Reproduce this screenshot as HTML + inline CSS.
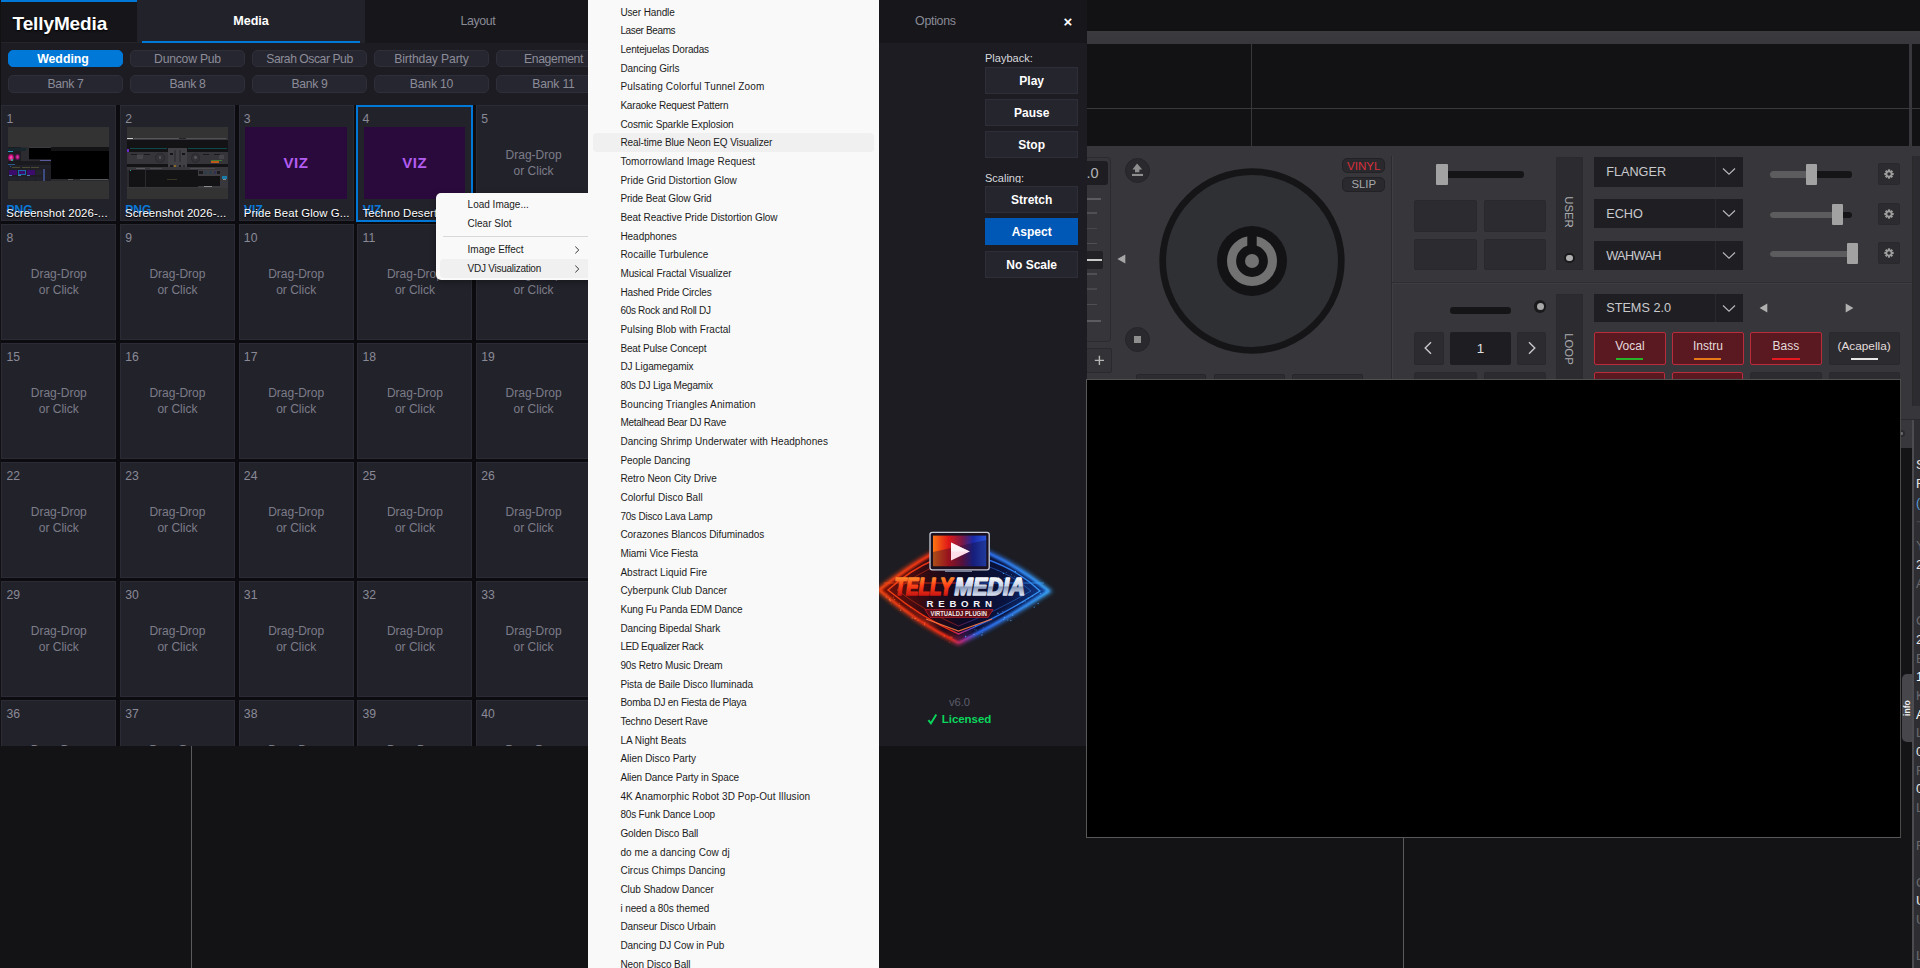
<!DOCTYPE html><html><head><meta charset="utf-8"><title>TellyMedia</title><style>
html,body{margin:0;padding:0}
body{width:1920px;height:968px;overflow:hidden;background:#131315;position:relative;font-family:"Liberation Sans",sans-serif;}
div,span,svg{position:absolute;box-sizing:border-box}
.t{white-space:pre;line-height:1}
.c{text-align:center}
#panel{left:0;top:0;width:1087px;height:746px;background:#1c1c22;overflow:hidden}
.pill{background:#262630;border:1px solid #2f2f3a;border-radius:5px;color:#8c8c98;font-size:12.2px;text-align:center;line-height:16.2px;height:17.4px;width:115.4px;white-space:pre}
.pill.on{background:#0078d7;border-color:#0078d7;color:#fff;font-weight:bold;font-size:12.3px;padding-right:5px}
.cell{background:#22222b;border:1px solid #2b2b35;width:114.8px;height:115.4px}
.num{left:4.1px;top:6.9px;font-size:12.2px;color:#8a8a96;line-height:1;white-space:pre}
.dd{left:0;width:100%;text-align:center;color:#7c7c88;font-size:12px;line-height:16.3px;top:40.9px;white-space:pre}
.thumb{left:5.7px;top:21px;width:101.2px;height:71.6px;background:#333333;overflow:hidden}
.viz{background:#2a0a3c}
.viz span{left:0;width:100%;top:28.2px;text-align:center;color:#b35cf2;font-weight:bold;font-size:15px;letter-spacing:.6px;line-height:1}
.badge{left:4.2px;top:97.4px;font-size:12.1px;font-weight:bold;color:#0a78d8;line-height:1;white-space:pre}
.name{left:4px;top:101.8px;font-size:11.4px;letter-spacing:.1px;color:#fff;line-height:1;white-space:pre;text-shadow:0 1px 1px #000}
.btn{left:985px;width:93.3px;height:27px;background:#25252e;border:1px solid #2e2e38;color:#fff;font-weight:bold;font-size:12px;text-align:center;line-height:26.6px;white-space:pre}
.mi{left:32.4px;font-size:10px;color:#1b1b1b;line-height:12px;white-space:pre;letter-spacing:-0.02px}
.dj{background:#37373b}
.pad{background:#2b2b2f;border:1px solid #29292c;border-radius:2px}
.drop{background:#1f1f23;color:#d4d4d6;font-size:12.7px;line-height:1;white-space:pre}
.redpad{background:#5c1820;border:1px solid #b02838;border-radius:2px;color:#e6dede;font-size:12px;text-align:center;white-space:pre}
</style></head><body>
<!-- VDJ background -->
<div style="left:1087px;top:0px;width:833px;height:31px;background:#121214"></div>
<div style="left:1087px;top:31px;width:833px;height:13px;background:linear-gradient(#3b3b3f,#38383c)"></div>
<div style="left:1087px;top:44px;width:833px;height:102px;background:#121214"></div>
<div style="left:1250.5px;top:44px;width:1px;height:102px;background:#38383a"></div>
<div style="left:1087px;top:107.5px;width:833px;height:1px;background:#3a3a3c"></div>
<div class="dj" style="left:1087px;top:146px;width:833px;height:274px;"></div>
<div style="left:1080px;top:157px;width:31px;height:185px;background:#36363a;border:1px solid #2b2b2f;border-radius:4px"></div>
<div style="left:1080px;top:161px;width:28px;height:23.5px;background:#1e1e22;border-radius:3px"></div>
<div class="t" style="left:1086.4px;top:165.6px;font-size:14.5px;color:#b4b4b8">.0</div>
<div style="left:1087px;top:197.7px;width:14.3px;height:2px;background:#5c5c60"></div>
<div style="left:1087px;top:212.0px;width:10px;height:1.6px;background:#505054"></div>
<div style="left:1087px;top:227.8px;width:10px;height:1.2px;background:#48484c"></div>
<div style="left:1087px;top:242.5px;width:10px;height:1.6px;background:#505054"></div>
<div style="left:1087px;top:273.2px;width:10px;height:1.6px;background:#505054"></div>
<div style="left:1087px;top:288.4px;width:10px;height:1.2px;background:#48484c"></div>
<div style="left:1087px;top:303.59999999999997px;width:10px;height:1.6px;background:#505054"></div>
<div style="left:1087px;top:320.0px;width:14.3px;height:2px;background:#5c5c60"></div>
<div style="left:1080px;top:251.2px;width:22.8px;height:17.8px;background:#222226;border-radius:2px"></div>
<div style="left:1087px;top:258.7px;width:14.8px;height:2.5px;background:#c8c8c8"></div>
<svg style="left:1117px;top:254px" width="9" height="10" viewBox="0 0 9 10"><path d="M8.3 0.4 L0.4 5 L8.3 9.6 Z" fill="#a6a6a6"/></svg>
<div style="left:1124.9px;top:157.9px;width:25px;height:25px;background:#2a2a2e;border:1.4px solid #252529;border-radius:50%"></div>
<svg style="left:1131px;top:163px" width="13" height="14" viewBox="0 0 13 14"><path d="M6.1 0.6 L11.2 6.5 L8.4 6.5 L8.4 9.3 L4 9.3 L4 6.5 L1.4 6.5 Z" fill="#8e8e8e"/><rect x="1" y="10.9" width="11" height="2.1" fill="#8e8e8e"/></svg>
<div style="left:1124.9px;top:326.7px;width:25px;height:25px;background:#2a2a2e;border:1.4px solid #252529;border-radius:50%"></div>
<div style="left:1134px;top:335.9px;width:7px;height:7.4px;background:#8e8e8e"></div>
<div style="left:1080px;top:348.2px;width:31.7px;height:24.5px;background:#333337;border:1px solid #2a2a2e;border-radius:2px"></div>
<svg style="left:1094px;top:355px" width="11" height="11" viewBox="0 0 11 11"><path d="M5.4 0.8 V10 M0.8 5.4 H10" stroke="#b4b4b4" stroke-width="1.4" fill="none"/></svg>
<div style="left:1136.4px;top:374px;width:69.6px;height:8px;background:#2d2d31;border:1px solid #27272b;border-radius:2px"></div>
<div style="left:1214px;top:374px;width:70.6px;height:8px;background:#2d2d31;border:1px solid #27272b;border-radius:2px"></div>
<div style="left:1292px;top:374px;width:70.5px;height:8px;background:#2d2d31;border:1px solid #27272b;border-radius:2px"></div>
<svg style="left:1156.8px;top:166.0px" width="190" height="190" viewBox="-95 -95 190 190"><circle r="89.3" fill="#2f3034" stroke="#151517" stroke-width="6.7"/><circle r="35" fill="#131315"/><circle r="20.45" fill="none" stroke="#727272" stroke-width="9.1"/><rect x="-4.7" y="-27" width="9.4" height="22" fill="#131315"/><circle r="11" fill="#131315"/><circle r="7" fill="#727272"/></svg>
<div style="left:1342.3px;top:158.2px;width:43px;height:14.8px;background:#2a2a2e;border:1px solid #222226;border-radius:5px;color:#d8303c;font-size:11.6px;text-align:center;line-height:13.6px;white-space:pre">VINYL</div>
<div style="left:1342.3px;top:177.4px;width:43px;height:14.4px;background:#2a2a2e;border:1px solid #222226;border-radius:5px;color:#a8a8ac;font-size:11.4px;text-align:center;line-height:13.2px;white-space:pre">SLIP</div>
<div style="left:1390.6px;top:156px;width:1px;height:224px;background:#2b2b2f"></div>
<div style="left:1391.5px;top:156px;width:1px;height:224px;background:#3f3f43"></div>
<div style="left:1392px;top:282.1px;width:520px;height:1px;background:#2e2e32"></div>
<div style="left:1392px;top:283.1px;width:520px;height:1px;background:#3e3e42"></div>
<div style="left:1444px;top:171.2px;width:80px;height:6.4px;background:#151517;border-radius:3.2px"></div>
<div style="left:1436px;top:163.8px;width:11.6px;height:21.2px;background:#a2a2a2;border-radius:1px"></div>
<div style="left:1414px;top:200px;width:63px;height:31.5px;background:#2c2c30;border:1px solid #29292c;border-radius:2px"></div>
<div style="left:1414px;top:238.8px;width:63px;height:30.8px;background:#2c2c30;border:1px solid #29292c;border-radius:2px"></div>
<div style="left:1484px;top:200px;width:61.8px;height:31.5px;background:#2c2c30;border:1px solid #29292c;border-radius:2px"></div>
<div style="left:1484px;top:238.8px;width:61.8px;height:30.8px;background:#2c2c30;border:1px solid #29292c;border-radius:2px"></div>
<div style="left:1556.3px;top:157px;width:26.5px;height:112.6px;background:#2c2c30;border:1px solid #2a2a2d"></div>
<div class="t" style="left:1568.4px;top:212.3px;width:0;height:0;"><div class="t" style="transform:translate(-50%,-50%) rotate(90deg);font-size:11.4px;color:#acacb0;left:0;top:0">USER</div></div>
<div style="left:1564.3px;top:253px;width:10.4px;height:10.4px;background:#1a1a1c;border-radius:50%"></div>
<div style="left:1566.3px;top:255px;width:6.4px;height:6.4px;background:#b0b0b0;border-radius:50%"></div>
<div class="drop" style="left:1594.2px;top:157px;width:149.2px;height:29.6px;"></div>
<div style="left:1715px;top:157px;width:1px;height:29.6px;background:#2a2a2e"></div>
<div class="t" style="left:1606.2px;top:166.0px;font-size:12.7px;color:#cacace;">FLANGER</div>
<svg style="left:1721.6px;top:167.3px" width="14" height="9" viewBox="0 0 14 9"><path d="M1 1.5 L7 7.2 L13 1.5" fill="none" stroke="#b8b8bc" stroke-width="1.15"/></svg>
<div class="drop" style="left:1594.2px;top:198.8px;width:149.2px;height:29.4px;"></div>
<div style="left:1715px;top:198.8px;width:1px;height:29.4px;background:#2a2a2e"></div>
<div class="t" style="left:1606.2px;top:208.1px;font-size:12.7px;color:#cacace;">ECHO</div>
<svg style="left:1721.6px;top:209.0px" width="14" height="9" viewBox="0 0 14 9"><path d="M1 1.5 L7 7.2 L13 1.5" fill="none" stroke="#b8b8bc" stroke-width="1.15"/></svg>
<div class="drop" style="left:1594.2px;top:241px;width:149.2px;height:28.6px;"></div>
<div style="left:1715px;top:241px;width:1px;height:28.6px;background:#2a2a2e"></div>
<div class="t" style="left:1606.2px;top:249.9px;font-size:12.7px;color:#cacace;letter-spacing:-0.6px;">WAHWAH</div>
<svg style="left:1721.6px;top:250.8px" width="14" height="9" viewBox="0 0 14 9"><path d="M1 1.5 L7 7.2 L13 1.5" fill="none" stroke="#b8b8bc" stroke-width="1.15"/></svg>
<div class="drop" style="left:1594.2px;top:293.6px;width:149.2px;height:28.8px;"></div>
<div style="left:1715px;top:293.6px;width:1px;height:28.8px;background:#2a2a2e"></div>
<div class="t" style="left:1606.2px;top:302.0px;font-size:12.7px;color:#cacace;">STEMS 2.0</div>
<svg style="left:1721.6px;top:303.5px" width="14" height="9" viewBox="0 0 14 9"><path d="M1 1.5 L7 7.2 L13 1.5" fill="none" stroke="#b8b8bc" stroke-width="1.15"/></svg>
<div style="left:1770px;top:171.4px;width:82px;height:6.2px;background:#151517;border-radius:3.1px"></div>
<div style="left:1770px;top:171.4px;width:38.5px;height:6.2px;background:#5c5c5e;border-radius:3.1px"></div>
<div style="left:1805.5px;top:163.8px;width:11.2px;height:21.2px;background:#a2a2a2;border-radius:1px"></div>
<div style="left:1770px;top:211.5px;width:82px;height:6.2px;background:#151517;border-radius:3.1px"></div>
<div style="left:1770px;top:211.5px;width:65px;height:6.2px;background:#5c5c5e;border-radius:3.1px"></div>
<div style="left:1832px;top:203.9px;width:11.2px;height:21.2px;background:#a2a2a2;border-radius:1px"></div>
<div style="left:1770px;top:250.8px;width:82px;height:6.2px;background:#151517;border-radius:3.1px"></div>
<div style="left:1770px;top:250.8px;width:80px;height:6.2px;background:#5c5c5e;border-radius:3.1px"></div>
<div style="left:1847px;top:243.20000000000002px;width:11.2px;height:21.2px;background:#a2a2a2;border-radius:1px"></div>
<div style="left:1877.5px;top:163px;width:22.2px;height:21.8px;background:#2c2c30;border:1px solid #29292c;border-radius:2px"></div>
<svg style="left:1883.6px;top:169px" width="10" height="10" viewBox="-6 -6 12 12"><g fill="#9e9e9e"><rect x="-1.3" y="-5.6" width="2.6" height="3" transform="rotate(0)"/><rect x="-1.3" y="-5.6" width="2.6" height="3" transform="rotate(45)"/><rect x="-1.3" y="-5.6" width="2.6" height="3" transform="rotate(90)"/><rect x="-1.3" y="-5.6" width="2.6" height="3" transform="rotate(135)"/><rect x="-1.3" y="-5.6" width="2.6" height="3" transform="rotate(180)"/><rect x="-1.3" y="-5.6" width="2.6" height="3" transform="rotate(225)"/><rect x="-1.3" y="-5.6" width="2.6" height="3" transform="rotate(270)"/><rect x="-1.3" y="-5.6" width="2.6" height="3" transform="rotate(315)"/></g><circle r="3.1" fill="none" stroke="#9e9e9e" stroke-width="2"/></svg>
<div style="left:1877.5px;top:202.8px;width:22.2px;height:21.8px;background:#2c2c30;border:1px solid #29292c;border-radius:2px"></div>
<svg style="left:1883.6px;top:208.8px" width="10" height="10" viewBox="-6 -6 12 12"><g fill="#9e9e9e"><rect x="-1.3" y="-5.6" width="2.6" height="3" transform="rotate(0)"/><rect x="-1.3" y="-5.6" width="2.6" height="3" transform="rotate(45)"/><rect x="-1.3" y="-5.6" width="2.6" height="3" transform="rotate(90)"/><rect x="-1.3" y="-5.6" width="2.6" height="3" transform="rotate(135)"/><rect x="-1.3" y="-5.6" width="2.6" height="3" transform="rotate(180)"/><rect x="-1.3" y="-5.6" width="2.6" height="3" transform="rotate(225)"/><rect x="-1.3" y="-5.6" width="2.6" height="3" transform="rotate(270)"/><rect x="-1.3" y="-5.6" width="2.6" height="3" transform="rotate(315)"/></g><circle r="3.1" fill="none" stroke="#9e9e9e" stroke-width="2"/></svg>
<div style="left:1877.5px;top:242.4px;width:22.2px;height:21.8px;background:#2c2c30;border:1px solid #29292c;border-radius:2px"></div>
<svg style="left:1883.6px;top:248.4px" width="10" height="10" viewBox="-6 -6 12 12"><g fill="#9e9e9e"><rect x="-1.3" y="-5.6" width="2.6" height="3" transform="rotate(0)"/><rect x="-1.3" y="-5.6" width="2.6" height="3" transform="rotate(45)"/><rect x="-1.3" y="-5.6" width="2.6" height="3" transform="rotate(90)"/><rect x="-1.3" y="-5.6" width="2.6" height="3" transform="rotate(135)"/><rect x="-1.3" y="-5.6" width="2.6" height="3" transform="rotate(180)"/><rect x="-1.3" y="-5.6" width="2.6" height="3" transform="rotate(225)"/><rect x="-1.3" y="-5.6" width="2.6" height="3" transform="rotate(270)"/><rect x="-1.3" y="-5.6" width="2.6" height="3" transform="rotate(315)"/></g><circle r="3.1" fill="none" stroke="#9e9e9e" stroke-width="2"/></svg>
<div style="left:1911.6px;top:156px;width:9px;height:250px;background:#2c2c30;border-left:1px solid #29292c"></div>
<div style="left:1450px;top:307.4px;width:61px;height:6.6px;background:#151517;border-radius:3.3px"></div>
<div style="left:1533.6px;top:300.2px;width:12.8px;height:12.8px;background:#1a1a1c;border-radius:50%"></div>
<div style="left:1536.5px;top:303.1px;width:7px;height:7px;background:#a8a8a8;border-radius:50%"></div>
<div style="left:1414px;top:331.5px;width:30px;height:33.4px;background:#2c2c30;border:1px solid #29292c;border-radius:2px"></div>
<div style="left:1450px;top:331.5px;width:61px;height:33.4px;background:#1e1e22;border-radius:2px"></div>
<div style="left:1516.5px;top:331.5px;width:29.3px;height:33.4px;background:#2c2c30;border:1px solid #29292c;border-radius:2px"></div>
<svg style="left:1423px;top:341px" width="10" height="14" viewBox="0 0 10 14"><path d="M8 1.2 L2.2 7 L8 12.8" fill="none" stroke="#c8c8cc" stroke-width="1.4"/></svg>
<svg style="left:1526.5px;top:341px" width="10" height="14" viewBox="0 0 10 14"><path d="M2 1.2 L7.8 7 L2 12.8" fill="none" stroke="#c8c8cc" stroke-width="1.4"/></svg>
<div class="t c" style="left:1450px;width:61px;top:341.8px;font-size:13.4px;color:#e0e0e0">1</div>
<div style="left:1556.3px;top:293.6px;width:26.5px;height:90px;background:#2c2c30;border:1px solid #2a2a2d"></div>
<div class="t" style="left:1568px;top:348.5px;width:0;height:0;"><div class="t" style="transform:translate(-50%,-50%) rotate(90deg);font-size:11.4px;color:#acacb0;left:0;top:0">LOOP</div></div>
<svg style="left:1759px;top:302.6px" width="9" height="10" viewBox="0 0 9 10"><path d="M8.3 0.6 L0.6 5 L8.3 9.4 Z" fill="#b0b0b0"/></svg>
<svg style="left:1845px;top:302.6px" width="9" height="10" viewBox="0 0 9 10"><path d="M0.7 0.6 L8.4 5 L0.7 9.4 Z" fill="#b0b0b0"/></svg>
<div style="left:1594.2px;top:331.5px;width:71.4px;height:33.4px;background:#5a1820;border:1px solid #b82c3c;border-radius:2px"></div>
<div class="t c" style="left:1594.2px;width:71.4px;top:339.6px;font-size:12px;color:#e4dcdc">Vocal</div>
<div style="left:1616.3000000000002px;top:357.6px;width:27.2px;height:2.4px;background:#28b428"></div>
<div style="left:1672.2px;top:331.5px;width:71.4px;height:33.4px;background:#5a1820;border:1px solid #b82c3c;border-radius:2px"></div>
<div class="t c" style="left:1672.2px;width:71.4px;top:339.6px;font-size:12px;color:#e4dcdc">Instru</div>
<div style="left:1694.3000000000002px;top:357.6px;width:27.2px;height:2.4px;background:#e87818"></div>
<div style="left:1750.2px;top:331.5px;width:71.5px;height:33.4px;background:#5a1820;border:1px solid #b82c3c;border-radius:2px"></div>
<div class="t c" style="left:1750.2px;width:71.5px;top:339.6px;font-size:12px;color:#e4dcdc">Bass</div>
<div style="left:1772.3500000000001px;top:357.6px;width:27.2px;height:2.4px;background:#e81820"></div>
<div style="left:1828.5px;top:331.5px;width:71.2px;height:33.4px;background:#2c2c30;border:1px solid #29292c;border-radius:2px"></div>
<div class="t c" style="left:1828.5px;width:71.2px;top:340.6px;font-size:11.8px;color:#e4dcdc">(Acapella)</div>
<div style="left:1850.5px;top:357.6px;width:27.2px;height:2.4px;background:#e8e8e8"></div>
<div style="left:1414px;top:372px;width:63px;height:12px;background:#2c2c30;border:1px solid #29292c;border-radius:2px"></div>
<div style="left:1484px;top:372px;width:61.8px;height:12px;background:#2c2c30;border:1px solid #29292c;border-radius:2px"></div>
<div style="left:1594.2px;top:372px;width:71.2px;height:12px;background:#5a1820;border:1px solid #b82c3c;border-radius:2px"></div>
<div style="left:1672.2px;top:372px;width:71.2px;height:12px;background:#5a1820;border:1px solid #b82c3c;border-radius:2px"></div>
<div style="left:1750.2px;top:372px;width:71.5px;height:12px;background:#2c2c30;border:1px solid #29292c;border-radius:2px"></div>
<div style="left:1828.5px;top:372px;width:71.2px;height:12px;background:#2c2c30;border:1px solid #29292c;border-radius:2px"></div>
<div style="left:190.6px;top:746px;width:1px;height:222px;background:#5a5a5c"></div>
<div style="left:1403.3px;top:838px;width:1px;height:130px;background:#5a5a5c"></div>
<div style="left:1909px;top:44px;width:2.7px;height:102px;background:#38383c"></div>
<div style="left:1900px;top:419px;width:20px;height:1.2px;background:#2a2a2e"></div>
<div style="left:1900px;top:420.2px;width:11.6px;height:28px;background:#38383c"></div>
<div style="left:1898px;top:430px;width:7.4px;height:7.4px;background:#2a2a2e;border-radius:50%"></div>
<div style="left:1900.4px;top:432.4px;width:2.6px;height:2.6px;background:#6a6a6e;border-radius:50%"></div>
<div style="left:1900px;top:448.2px;width:11.6px;height:520px;background:#141416"></div>
<div style="left:1911.6px;top:420.2px;width:2px;height:548px;background:#4c4c50"></div>
<div style="left:1913.6px;top:420.2px;width:6.4px;height:548px;background:#2e2e32"></div>
<div style="left:1902px;top:673.7px;width:9.8px;height:68.5px;background:#47474b;border-radius:5px 0 0 5px"></div>
<div class="t" style="left:1907.2px;top:708px;width:0;height:0"><div class="t" style="transform:translate(-50%,-50%) rotate(-90deg);font-size:8.6px;font-weight:bold;color:#f0f0f0;left:0;top:0">info</div></div>
<div class="t" style="left:1916px;top:457.5px;font-size:13px;color:#e4e4e4">S</div>
<div class="t" style="left:1916px;top:476.5px;font-size:13px;color:#e4e4e4">F</div>
<div class="t" style="left:1916px;top:495.5px;font-size:13px;color:#5a9ad8">(</div>
<div class="t" style="left:1916px;top:514.5px;font-size:13px;color:#505054">~</div>
<div class="t" style="left:1916px;top:538.5px;font-size:13px;color:#6a6a6e">Y</div>
<div class="t" style="left:1916px;top:557.5px;font-size:13px;color:#e4e4e4">2</div>
<div class="t" style="left:1916px;top:576.5px;font-size:13px;color:#6a6a6e">A</div>
<div class="t" style="left:1916px;top:613.5px;font-size:13px;color:#6a6a6e">G</div>
<div class="t" style="left:1916px;top:632.5px;font-size:13px;color:#e4e4e4">2</div>
<div class="t" style="left:1916px;top:651.5px;font-size:13px;color:#6a6a6e">E</div>
<div class="t" style="left:1916px;top:669.5px;font-size:13px;color:#ffffff">1</div>
<div class="t" style="left:1916px;top:688.5px;font-size:13px;color:#6a6a6e">K</div>
<div class="t" style="left:1916px;top:707.5px;font-size:13px;color:#ffffff">A</div>
<div class="t" style="left:1916px;top:725.5px;font-size:13px;color:#6a6a6e">L</div>
<div class="t" style="left:1916px;top:744.5px;font-size:13px;color:#e4e4e4">0</div>
<div class="t" style="left:1916px;top:763.5px;font-size:13px;color:#6a6a6e">F</div>
<div class="t" style="left:1916px;top:781.5px;font-size:13px;color:#e4e4e4">0</div>
<div class="t" style="left:1916px;top:800.5px;font-size:13px;color:#6a6a6e">L</div>
<div class="t" style="left:1916px;top:838.5px;font-size:13px;color:#6a6a6e">F</div>
<div class="t" style="left:1916px;top:875.5px;font-size:13px;color:#6a6a6e">G</div>
<div class="t" style="left:1916px;top:893.5px;font-size:13px;color:#e4e4e4">U</div>
<div class="t" style="left:1916px;top:912.5px;font-size:13px;color:#6a6a6e">U</div>
<div class="t" style="left:1916px;top:948.5px;font-size:13px;color:#6a6a6e">L</div>
<div id="panel">
<div style="left:0px;top:0px;width:1087px;height:43px;background:#16161b"></div>
<div style="left:0px;top:42px;width:137px;height:1.2px;background:#24242b"></div>
<div style="left:1px;top:0px;width:136px;height:2.2px;background:#0078d7"></div>
<div style="left:1px;top:2px;width:136px;height:40px;background:#15151a"></div>
<div class="t" style="left:12.6px;top:13.5px;font-size:19px;letter-spacing:-.12px;font-weight:bold;color:#fff;text-shadow:0 1px 2px #000">TellyMedia</div>
<div style="left:137px;top:0px;width:227.8px;height:43.2px;background:#22222b"></div>
<div style="left:142px;top:40.6px;width:217.7px;height:2.6px;background:#0078d7"></div>
<div class="t c" style="left:137px;width:228px;top:14.5px;font-size:12.6px;font-weight:bold;color:#fff">Media</div>
<div class="t c" style="left:364px;width:228px;top:14.9px;font-size:12.4px;letter-spacing:-.4px;color:#8a8a96">Layout</div>
<div class="t c" style="left:821.4px;width:228px;top:14.8px;font-size:12.4px;letter-spacing:-.3px;color:#8a8a96">Options</div>
<div class="t" style="left:1063.6px;top:14.2px;font-size:15px;font-weight:bold;color:#fff">×</div>
<div class="pill on" style="left:7.8px;top:49.8px;letter-spacing:0px">Wedding</div>
<div class="pill" style="left:129.8px;top:49.8px;letter-spacing:-0.23px">Duncow Pub</div>
<div class="pill" style="left:251.8px;top:49.8px;letter-spacing:-0.47px">Sarah Oscar Pub</div>
<div class="pill" style="left:373.8px;top:49.8px;letter-spacing:-0.14px">Birthday Party</div>
<div class="pill" style="left:495.8px;top:49.8px;letter-spacing:-0.37px">Enagement</div>
<div class="pill" style="left:7.8px;top:75.4px;letter-spacing:-0.33px">Bank 7</div>
<div class="pill" style="left:129.8px;top:75.4px;letter-spacing:-0.33px">Bank 8</div>
<div class="pill" style="left:251.8px;top:75.4px;letter-spacing:-0.33px">Bank 9</div>
<div class="pill" style="left:373.8px;top:75.4px;letter-spacing:-0.2px">Bank 10</div>
<div class="pill" style="left:495.8px;top:75.4px;letter-spacing:-0.2px">Bank 11</div>
<div style="left:0px;top:104.6px;width:600px;height:642px;background:#0c0c10"></div>
<div style="left:0px;top:0px;width:1.05px;height:746px;background:#111113"></div>
<div class="cell" style="left:1.33px;top:105.2px;"><span class="num">1</span><div class="thumb"><div style="left:0.0px;top:19.8px;width:101.4px;height:33.8px;background:#1e1e24"></div><div style="left:43.0px;top:19.8px;width:58.4px;height:3.8px;background:#141416"></div><div style="left:43.1px;top:23.4px;width:58.3px;height:28.2px;background:#000"></div><div style="left:43.0px;top:51.6px;width:58.4px;height:2px;background:#2a2a2e"></div><div style="left:60.0px;top:52.3px;width:5px;height:0.8px;background:#5a5a5e"></div><div style="left:72.0px;top:52.2px;width:28px;height:0.9px;background:#55595c"></div><div style="left:0.0px;top:19.8px;width:21px;height:14.5px;background:#1c1c22"></div><div style="left:12.5px;top:19.8px;width:8.5px;height:14.5px;background:#2b2b30"></div><div style="left:21.0px;top:19.8px;width:22px;height:1.4px;background:#3a3a40"></div><div style="left:21.4px;top:21.0px;width:21.3px;height:11.3px;background:#000"></div><div style="left:21.4px;top:32.4px;width:11px;height:1.3px;background:#2a2a30"></div><div style="left:32.0px;top:32.6px;width:10.6px;height:1.5px;background:#5a5a9a"></div><div style="left:0.0px;top:20.8px;width:18px;height:2.6px;background:#16262c"></div><div style="left:0.0px;top:23.4px;width:4.6px;height:1.6px;background:#2a9ac0"></div><div style="left:0.2px;top:26.4px;width:5.4px;height:7.4px;background:radial-gradient(closest-side,#ff6ac8,#e01888 55%,#701050);border-radius:35%"></div><div style="left:6.6px;top:26.8px;width:5px;height:6.4px;background:radial-gradient(closest-side,#f040b0,#a01878 60%,#401040);border-radius:35%"></div><div style="left:2.6px;top:31.4px;width:2.2px;height:2.2px;background:#20c8a0;border-radius:50%"></div><div style="left:0.0px;top:34.3px;width:43px;height:3.6px;background:#1a1a1e"></div><div style="left:0.0px;top:37.0px;width:7px;height:0.9px;background:#2a5a8a"></div><div style="left:0.0px;top:38.0px;width:43px;height:3.3px;background:#202028"></div><div style="left:1.5px;top:38.6px;width:1.6px;height:1.6px;background:#2a5aa0"></div><div style="left:4.0px;top:39.4px;width:8px;height:0.8px;background:#4a4a30"></div><div style="left:14.0px;top:39.4px;width:8px;height:0.8px;background:#4a4a30"></div><div style="left:23.0px;top:39.4px;width:8px;height:0.8px;background:#4a4a30"></div><div style="left:1.2px;top:42.8px;width:7.7px;height:4.8px;background:#3c0c6c"></div><div style="left:10.2px;top:42.5px;width:8.2px;height:5.6px;background:#3c0c6c;border:.7px solid #1a6aa8"></div><div style="left:19.0px;top:42.8px;width:7.6px;height:4.8px;background:#3c0c6c"></div><div style="left:28.0px;top:42.8px;width:6.4px;height:4.8px;background:#24242e"></div><div style="left:1.2px;top:48.2px;width:3px;height:0.7px;background:#4a7aa8"></div><div style="left:10.4px;top:48.2px;width:3px;height:0.7px;background:#4a7aa8"></div><div style="left:19.2px;top:48.2px;width:3px;height:0.7px;background:#4a7aa8"></div><div style="left:1.2px;top:49.8px;width:7.7px;height:3.8px;background:#22222c"></div><div style="left:10.2px;top:49.8px;width:8px;height:3.8px;background:#22222c"></div><div style="left:19.0px;top:49.8px;width:7.6px;height:3.8px;background:#22222c"></div><div style="left:28.0px;top:49.8px;width:6.4px;height:3.8px;background:#22222c"></div><div style="left:35.0px;top:41.5px;width:1.8px;height:12.1px;background:#3c4c80"></div></div><span class="badge">PNG</span><span class="name">Screenshot 2026-...</span></div>
<div class="cell" style="left:120.05px;top:105.2px;"><span class="num">2</span><div class="thumb"><div style="left:0.0px;top:10.5px;width:101.4px;height:50.4px;background:#38383c"></div><div style="left:0.4px;top:11.0px;width:6px;height:1.2px;background:#c8c8c8"></div><div style="left:7.5px;top:11.3px;width:45px;height:0.7px;background:#55555a"></div><div style="left:52.5px;top:11.0px;width:7px;height:1.3px;background:#242428"></div><div style="left:59.5px;top:11.3px;width:40px;height:0.7px;background:#505055"></div><div style="left:0.4px;top:12.8px;width:100.6px;height:12.3px;background:#131315"></div><div style="left:3.5px;top:20.8px;width:37px;height:0.7px;background:#0e4848"></div><div style="left:61.5px;top:20.8px;width:39px;height:0.7px;background:#0e4848"></div><div style="left:0.4px;top:21.4px;width:1.8px;height:4.2px;background:#6a28c8"></div><div style="left:41.5px;top:21.0px;width:18.5px;height:20px;background:#404045"></div><div style="left:43.5px;top:26.1px;width:3px;height:1.6px;background:#151517"></div><div style="left:55.0px;top:26.1px;width:3px;height:1.6px;background:#151517"></div><div style="left:47.5px;top:22.8px;width:1.4px;height:12px;background:#333338"></div><div style="left:52.5px;top:22.8px;width:1.4px;height:12px;background:#333338"></div><div style="left:43.5px;top:37.8px;width:2.4px;height:2px;background:#1a1a1c"></div><div style="left:47.5px;top:37.8px;width:2px;height:2px;background:#8a6a20"></div><div style="left:52.0px;top:37.8px;width:2.6px;height:2px;background:#1a1a1c"></div><div style="left:56.0px;top:37.8px;width:2px;height:2px;background:#2a2a2e"></div><div style="left:0.4px;top:25.1px;width:41px;height:11.8px;background:#36363a"></div><div style="left:60.0px;top:25.1px;width:41px;height:11.8px;background:#36363a"></div><div style="left:28.5px;top:26.0px;width:9.4px;height:9.4px;border:.8px solid #2a2a2e;border-radius:50%;background:#333337"></div><div style="left:31.8px;top:29.3px;width:2.8px;height:2.8px;border-radius:50%;background:#555558"></div><div style="left:64.0px;top:26.0px;width:9.4px;height:9.4px;border:.8px solid #2a2a2e;border-radius:50%;background:#333337"></div><div style="left:67.3px;top:29.3px;width:2.8px;height:2.8px;border-radius:50%;background:#555558"></div><div style="left:4.5px;top:26.4px;width:6px;height:1.4px;background:#1a1a1c"></div><div style="left:17.5px;top:26.4px;width:6px;height:1.4px;background:#1a1a1c"></div><div style="left:76.5px;top:26.4px;width:6px;height:1.4px;background:#1a1a1c"></div><div style="left:87.5px;top:26.4px;width:6px;height:1.4px;background:#1a1a1c"></div><div style="left:10.5px;top:28.3px;width:6px;height:3.4px;background:#45454a"></div><div style="left:92.5px;top:28.3px;width:5px;height:3.4px;background:#45454a"></div><div style="left:84.5px;top:32.7px;width:11px;height:1.6px;background:#3c7a34"></div><div style="left:84.5px;top:34.2px;width:7.5px;height:1.7px;background:#c0581c"></div><div style="left:0.4px;top:36.9px;width:41px;height:2.8px;background:#131315"></div><div style="left:60.0px;top:36.9px;width:41px;height:2.8px;background:#131315"></div><div style="left:0.4px;top:39.7px;width:100.6px;height:3px;background:#37373b"></div><div style="left:9.5px;top:40.6px;width:9px;height:1px;background:#5a5a5e"></div><div style="left:23.5px;top:40.6px;width:12px;height:0.8px;background:#4c4c50"></div><div style="left:63.5px;top:40.6px;width:25px;height:0.8px;background:#4c4c50"></div><div style="left:0.5px;top:42.7px;width:1.8px;height:17.4px;background:#2c2c30"></div><div style="left:2.3px;top:42.7px;width:68.9px;height:17.4px;background:#131315"></div><div style="left:18.1px;top:43.3px;width:0.7px;height:16.8px;background:#2a2a2e"></div><div style="left:2.9px;top:42.7px;width:1px;height:1.6px;background:#30b0a0"></div><div style="left:40.0px;top:51.8px;width:10px;height:0.6px;background:#3a3424"></div><div style="left:71.2px;top:42.8px;width:22.2px;height:5.6px;background:#3e3e42"></div><div style="left:72.5px;top:43.8px;width:3.5px;height:3px;background:#1a1a1c"></div><div style="left:77.5px;top:43.8px;width:3px;height:3px;background:#2c3c48"></div><div style="left:82.5px;top:43.8px;width:3px;height:3px;background:#2c3c48"></div><div style="left:87.5px;top:43.8px;width:2px;height:3px;background:#303058"></div><div style="left:90.5px;top:43.8px;width:2.6px;height:3px;background:#1a1a1c"></div><div style="left:71.2px;top:48.4px;width:22.2px;height:10.4px;background:#131315"></div><div style="left:71.2px;top:58.8px;width:22.2px;height:1.6px;background:#3a3a3e"></div><div style="left:77.5px;top:59.2px;width:8px;height:1px;background:#8a8a8a"></div><div style="left:95.5px;top:48.8px;width:4.6px;height:2.8px;background:#1a7aa8"></div><div style="left:96.1px;top:51.7px;width:3.4px;height:0.8px;background:#8a8a8a"></div></div><span class="badge">PNG</span><span class="name">Screenshot 2026-...</span></div>
<div class="cell" style="left:238.77px;top:105.2px;"><span class="num">3</span><div class="thumb viz"><span>VIZ</span></div><span class="badge">VIZ</span><span class="name">Pride Beat Glow G...</span></div>
<div class="cell" style="left:357.49px;top:105.2px;"><span class="num">4</span><div class="thumb viz"><span>VIZ</span></div><span class="badge">VIZ</span><span class="name">Techno Desert Rave</span></div>
<div class="cell" style="left:476.21px;top:105.2px;"><span class="num">5</span><div class="dd">Drag-Drop
or Click</div></div>
<div class="cell" style="left:1.33px;top:224.2px;"><span class="num">8</span><div class="dd">Drag-Drop
or Click</div></div>
<div class="cell" style="left:120.05px;top:224.2px;"><span class="num">9</span><div class="dd">Drag-Drop
or Click</div></div>
<div class="cell" style="left:238.77px;top:224.2px;"><span class="num">10</span><div class="dd">Drag-Drop
or Click</div></div>
<div class="cell" style="left:357.49px;top:224.2px;"><span class="num">11</span><div class="dd">Drag-Drop
or Click</div></div>
<div class="cell" style="left:476.21px;top:224.2px;"><span class="num">12</span><div class="dd">Drag-Drop
or Click</div></div>
<div class="cell" style="left:1.33px;top:343.2px;"><span class="num">15</span><div class="dd">Drag-Drop
or Click</div></div>
<div class="cell" style="left:120.05px;top:343.2px;"><span class="num">16</span><div class="dd">Drag-Drop
or Click</div></div>
<div class="cell" style="left:238.77px;top:343.2px;"><span class="num">17</span><div class="dd">Drag-Drop
or Click</div></div>
<div class="cell" style="left:357.49px;top:343.2px;"><span class="num">18</span><div class="dd">Drag-Drop
or Click</div></div>
<div class="cell" style="left:476.21px;top:343.2px;"><span class="num">19</span><div class="dd">Drag-Drop
or Click</div></div>
<div class="cell" style="left:1.33px;top:462.2px;"><span class="num">22</span><div class="dd">Drag-Drop
or Click</div></div>
<div class="cell" style="left:120.05px;top:462.2px;"><span class="num">23</span><div class="dd">Drag-Drop
or Click</div></div>
<div class="cell" style="left:238.77px;top:462.2px;"><span class="num">24</span><div class="dd">Drag-Drop
or Click</div></div>
<div class="cell" style="left:357.49px;top:462.2px;"><span class="num">25</span><div class="dd">Drag-Drop
or Click</div></div>
<div class="cell" style="left:476.21px;top:462.2px;"><span class="num">26</span><div class="dd">Drag-Drop
or Click</div></div>
<div class="cell" style="left:1.33px;top:581.2px;"><span class="num">29</span><div class="dd">Drag-Drop
or Click</div></div>
<div class="cell" style="left:120.05px;top:581.2px;"><span class="num">30</span><div class="dd">Drag-Drop
or Click</div></div>
<div class="cell" style="left:238.77px;top:581.2px;"><span class="num">31</span><div class="dd">Drag-Drop
or Click</div></div>
<div class="cell" style="left:357.49px;top:581.2px;"><span class="num">32</span><div class="dd">Drag-Drop
or Click</div></div>
<div class="cell" style="left:476.21px;top:581.2px;"><span class="num">33</span><div class="dd">Drag-Drop
or Click</div></div>
<div class="cell" style="left:1.33px;top:700.2px;"><span class="num">36</span><div class="dd">Drag-Drop
or Click</div></div>
<div class="cell" style="left:120.05px;top:700.2px;"><span class="num">37</span><div class="dd">Drag-Drop
or Click</div></div>
<div class="cell" style="left:238.77px;top:700.2px;"><span class="num">38</span><div class="dd">Drag-Drop
or Click</div></div>
<div class="cell" style="left:357.49px;top:700.2px;"><span class="num">39</span><div class="dd">Drag-Drop
or Click</div></div>
<div class="cell" style="left:476.21px;top:700.2px;"><span class="num">40</span><div class="dd">Drag-Drop
or Click</div></div>
<div style="left:356.4px;top:105.2px;width:117.1px;height:116.7px;border:2.5px solid #0078d7"></div>
<div class="t" style="left:985px;top:53.4px;font-size:11px;color:#d8d8de;height:10.2px;overflow:hidden;width:80px">Playback:</div>
<div class="btn" style="top:67px">Play</div>
<div class="btn" style="top:99px">Pause</div>
<div class="btn" style="top:131.2px">Stop</div>
<div class="t" style="left:985px;top:172.5px;font-size:11px;color:#d8d8de;height:10.2px;overflow:hidden;width:80px">Scaling:</div>
<div class="btn" style="top:186px;">Stretch</div>
<div class="btn" style="top:218.3px;background:#0058b6;border-color:#0058b6;">Aspect</div>
<div class="btn" style="top:250.6px;">No Scale</div>
<svg style="left:866px;top:520px" width="200" height="140" viewBox="866 520 200 140">
<defs>
<linearGradient id="lgA" x1="880" x2="1048" y1="0" y2="0" gradientUnits="userSpaceOnUse"><stop offset="0" stop-color="#ff4a12"/><stop offset=".42" stop-color="#ff2a14"/><stop offset=".5" stop-color="#b030a0"/><stop offset=".58" stop-color="#2a6cff"/><stop offset="1" stop-color="#3aa8ff"/></linearGradient>
<linearGradient id="lgT" x1="0" x2="0" y1="576" y2="596" gradientUnits="userSpaceOnUse"><stop offset="0" stop-color="#ff9a30"/><stop offset=".45" stop-color="#ff4418"/><stop offset="1" stop-color="#c81410"/></linearGradient>
<linearGradient id="lgM" x1="0" x2="0" y1="576" y2="596" gradientUnits="userSpaceOnUse"><stop offset="0" stop-color="#ffffff"/><stop offset=".5" stop-color="#c8d4e8"/><stop offset=".55" stop-color="#8898b8"/><stop offset="1" stop-color="#dfe6f4"/></linearGradient>
<linearGradient id="lgS" x1="932" x2="987" y1="0" y2="0" gradientUnits="userSpaceOnUse"><stop offset="0" stop-color="#ff7a10"/><stop offset=".3" stop-color="#e01818"/><stop offset=".55" stop-color="#7a1848"/><stop offset=".75" stop-color="#1a2aa8"/><stop offset="1" stop-color="#2a58e0"/></linearGradient>
<linearGradient id="lgF" x1="880" x2="1048" y1="0" y2="0" gradientUnits="userSpaceOnUse"><stop offset="0" stop-color="#7a1008"/><stop offset=".3" stop-color="#2a0a14"/><stop offset=".5" stop-color="#0c0a24"/><stop offset=".75" stop-color="#0a1440"/><stop offset="1" stop-color="#103a90"/></linearGradient>
<filter id="b3" x="-20%" y="-20%" width="140%" height="140%"><feGaussianBlur stdDeviation="2.3"/></filter>
<filter id="b1" x="-20%" y="-20%" width="140%" height="140%"><feGaussianBlur stdDeviation="0.9"/></filter>
</defs>
<path d="M880 590 Q908 568 934 553.5 L988 553.5 Q1020 568 1048 591 Q1002 621 958.5 642 Q916 621 880 590Z" fill="none" stroke="url(#lgA)" stroke-width="5.5" filter="url(#b3)" opacity=".9"/>
<path d="M880 590 Q908 568 934 553.5 L988 553.5 Q1020 568 1048 591 Q1002 621 958.5 642 Q916 621 880 590Z" fill="url(#lgF)"/>
<path d="M880 590 Q908 568 934 553.5 L988 553.5 Q1020 568 1048 591 Q1002 621 958.5 642 Q916 621 880 590Z" fill="none" stroke="url(#lgA)" stroke-width="2.2" filter="url(#b1)"/>
<path d="M888 590 Q910 570 936 559 L986 559 Q1018 570 1040 591 Q998 618 958.5 634 Q922 618 888 590Z" fill="none" stroke="url(#lgA)" stroke-width="1.4" opacity=".9"/>
<path d="M897 590 Q916 574 938 565 L984 565 Q1012 574 1031 591 Q995 612 958.5 626 Q926 612 897 590Z" fill="none" stroke="url(#lgA)" stroke-width=".8" opacity=".55"/>
<path d="M900 600 L958.5 640 L1020 600 L990 622 L958.5 636 L925 622Z" fill="url(#lgA)" opacity=".35" filter="url(#b1)"/>
<path d="M884 583 H1044" stroke="url(#lgA)" stroke-width="1" opacity=".7"/>
<path d="M926 619 L958.5 631 L992 619" fill="none" stroke="#ff7a40" stroke-width="1.3" opacity=".9"/>
<circle cx="904.6" cy="611.1" r="0.38" fill="#ff6a30" opacity="0.77"/><circle cx="906.9" cy="611.2" r="0.37" fill="#ff6a30" opacity="0.72"/><circle cx="886.4" cy="597.2" r="0.72" fill="#ff6a30" opacity="0.56"/><circle cx="900.4" cy="610.2" r="0.61" fill="#ff6a30" opacity="0.70"/><circle cx="949.6" cy="642.3" r="0.48" fill="#ff6a30" opacity="0.57"/><circle cx="891.1" cy="604.0" r="0.43" fill="#ff6a30" opacity="0.79"/><circle cx="928.0" cy="623.7" r="0.38" fill="#ff6a30" opacity="0.53"/><circle cx="899.5" cy="603.2" r="0.49" fill="#ff6a30" opacity="0.79"/><circle cx="914.5" cy="618.5" r="0.66" fill="#ff6a30" opacity="0.62"/><circle cx="924.4" cy="624.8" r="0.68" fill="#ff6a30" opacity="0.64"/><circle cx="950.3" cy="637.1" r="0.69" fill="#ff6a30" opacity="0.58"/><circle cx="915.5" cy="618.5" r="0.69" fill="#ff6a30" opacity="0.79"/><circle cx="944.2" cy="635.9" r="0.62" fill="#ff6a30" opacity="0.79"/><circle cx="918.0" cy="620.4" r="0.56" fill="#ff6a30" opacity="0.83"/><circle cx="889.5" cy="599.4" r="0.80" fill="#ff6a30" opacity="0.91"/><circle cx="903.2" cy="609.5" r="0.36" fill="#ff6a30" opacity="0.73"/><circle cx="893.5" cy="597.1" r="0.70" fill="#ff6a30" opacity="0.56"/><circle cx="900.7" cy="610.4" r="0.39" fill="#ff6a30" opacity="0.72"/><circle cx="924.8" cy="623.0" r="0.74" fill="#ff6a30" opacity="0.64"/><circle cx="912.2" cy="617.9" r="0.78" fill="#ff6a30" opacity="0.58"/><circle cx="894.7" cy="599.6" r="0.57" fill="#ff6a30" opacity="0.79"/><circle cx="899.4" cy="605.6" r="0.52" fill="#ff6a30" opacity="0.78"/><circle cx="951.9" cy="637.1" r="0.63" fill="#ff6a30" opacity="0.84"/><circle cx="890.2" cy="600.7" r="0.74" fill="#ff6a30" opacity="0.90"/><circle cx="910.9" cy="607.5" r="0.64" fill="#ff6a30" opacity="0.53"/><circle cx="887.0" cy="593.9" r="0.50" fill="#ff6a30" opacity="0.53"/><circle cx="1041.9" cy="590.2" r="0.51" fill="#4aa0ff" opacity="0.51"/><circle cx="974.7" cy="629.3" r="0.46" fill="#4aa0ff" opacity="0.67"/><circle cx="1012.6" cy="615.2" r="0.80" fill="#4aa0ff" opacity="0.73"/><circle cx="1002.8" cy="611.5" r="0.50" fill="#4aa0ff" opacity="0.63"/><circle cx="975.7" cy="625.7" r="0.78" fill="#4aa0ff" opacity="0.76"/><circle cx="1032.5" cy="595.8" r="0.59" fill="#4aa0ff" opacity="0.99"/><circle cx="976.1" cy="630.1" r="0.52" fill="#4aa0ff" opacity="0.58"/><circle cx="982.4" cy="632.3" r="0.50" fill="#4aa0ff" opacity="0.61"/><circle cx="982.0" cy="634.9" r="0.71" fill="#4aa0ff" opacity="0.91"/><circle cx="983.2" cy="627.8" r="0.51" fill="#4aa0ff" opacity="0.51"/><circle cx="1040.4" cy="593.3" r="0.66" fill="#4aa0ff" opacity="0.98"/><circle cx="1010.8" cy="620.5" r="0.78" fill="#4aa0ff" opacity="0.68"/><circle cx="1024.7" cy="601.1" r="0.44" fill="#4aa0ff" opacity="0.81"/><circle cx="974.0" cy="634.4" r="0.64" fill="#4aa0ff" opacity="0.90"/><circle cx="1038.2" cy="603.6" r="0.70" fill="#4aa0ff" opacity="0.88"/><circle cx="1003.8" cy="619.5" r="0.50" fill="#4aa0ff" opacity="0.90"/><circle cx="965.6" cy="636.6" r="0.78" fill="#4aa0ff" opacity="0.86"/><circle cx="1028.2" cy="598.3" r="0.76" fill="#4aa0ff" opacity="0.90"/><circle cx="1034.3" cy="607.2" r="0.65" fill="#4aa0ff" opacity="0.68"/><circle cx="997.9" cy="613.3" r="0.79" fill="#4aa0ff" opacity="0.82"/><circle cx="1004.5" cy="617.4" r="0.74" fill="#4aa0ff" opacity="0.91"/><circle cx="1025.6" cy="601.8" r="0.46" fill="#4aa0ff" opacity="0.79"/><circle cx="1022.8" cy="602.0" r="0.76" fill="#4aa0ff" opacity="0.68"/><circle cx="1007.8" cy="620.0" r="0.54" fill="#4aa0ff" opacity="0.96"/><circle cx="1004.1" cy="617.4" r="0.36" fill="#4aa0ff" opacity="0.72"/><circle cx="1026.4" cy="606.6" r="0.43" fill="#4aa0ff" opacity="0.74"/><circle cx="1006.3" cy="572.4" r="0.47" fill="#6ab8ff" opacity=".8"/><circle cx="1004.2" cy="578.5" r="0.45" fill="#6ab8ff" opacity=".8"/><circle cx="1016.7" cy="578.2" r="0.57" fill="#6ab8ff" opacity=".8"/><circle cx="1011.5" cy="574.7" r="0.45" fill="#6ab8ff" opacity=".8"/><circle cx="1014.5" cy="576.6" r="0.44" fill="#6ab8ff" opacity=".8"/><circle cx="1015.5" cy="571.5" r="0.58" fill="#6ab8ff" opacity=".8"/><circle cx="1022.8" cy="581.0" r="0.58" fill="#6ab8ff" opacity=".8"/><circle cx="1003.4" cy="573.4" r="0.58" fill="#6ab8ff" opacity=".8"/><circle cx="997.4" cy="570.6" r="0.32" fill="#6ab8ff" opacity=".8"/><circle cx="1021.5" cy="578.8" r="0.57" fill="#6ab8ff" opacity=".8"/><circle cx="998.8" cy="577.2" r="0.50" fill="#6ab8ff" opacity=".8"/>
<!-- TV -->
<rect x="930" y="532.4" width="59.2" height="37.4" rx="2.2" fill="#1a1020" stroke="#c8ccd8" stroke-width="1.3"/>
<rect x="933" y="535.6" width="53.2" height="30.6" fill="url(#lgS)"/>
<path d="M933 552 L986.2 540 L986.2 566.2 L933 566.2Z" fill="#100828" opacity=".35"/>
<path d="M951 542.5 L969.8 551.5 L951 560.6Z" fill="#ffe0ea"/>
<path d="M951 542.5 L969.8 551.5 L951 551.5Z" fill="#ffffff" opacity=".6"/>
<rect x="945" y="570.4" width="27" height="1.5" fill="#8088a0"/>
<!-- text -->
<text x="894.5" y="594.8" font-family="Liberation Sans" font-weight="bold" font-style="italic" font-size="24.5" textLength="58" lengthAdjust="spacingAndGlyphs" fill="url(#lgT)" stroke="url(#lgT)" stroke-width="1.7" stroke-linejoin="round">TELLY</text>
<text x="954.5" y="594.8" font-family="Liberation Sans" font-weight="bold" font-style="italic" font-size="24.5" textLength="70.5" lengthAdjust="spacingAndGlyphs" fill="url(#lgM)" stroke="url(#lgM)" stroke-width="1.7" stroke-linejoin="round">MEDIA</text>
<text x="926.5" y="607.2" font-family="Liberation Sans" font-weight="bold" font-size="9.6" textLength="65.5" lengthAdjust="spacing" fill="#f4f4f8">REBORN</text>
<path d="M925 609.6 H993 L988 617.4 H930Z" fill="#5a0c14" stroke="#d02030" stroke-width=".7"/>
<text x="930.5" y="616" font-family="Liberation Sans" font-weight="bold" font-size="6.6" textLength="56.5" lengthAdjust="spacingAndGlyphs" fill="#f0e8e8">VIRTUALDJ PLUGIN</text>
</svg>
<div class="t c" style="left:909px;width:101px;top:697.4px;font-size:11.2px;color:#5c5c6a">v6.0</div>
<svg style="left:926px;top:712px" width="13" height="14" viewBox="926 712 13 14"><path d="M928.4 720.2 L930.9 723.3 L936.3 714.5" fill="none" stroke="#0bd65c" stroke-width="1.9" stroke-linejoin="miter"/></svg>
<div class="t" style="left:941.8px;top:713.8px;font-size:11.5px;font-weight:bold;color:#0bd65c;letter-spacing:-.05px">Licensed</div>
</div>
<div style="left:1085.9px;top:379.3px;width:815.1px;height:458.8px;background:#000;border:1.2px solid #585858;border-top-color:#505050;border-right:1.5px solid #4a4a4a"></div>
<div style="left:435.6px;top:193.2px;width:170px;height:87px;background:#f9f9f9;border-radius:5px;box-shadow:0 2px 6px rgba(0,0,0,.35)"><div class="t" style="left:32px;top:6.1px;font-size:10px;color:#1b1b1b;line-height:12px">Load Image...</div><div class="t" style="left:32px;top:25.3px;font-size:10px;color:#1b1b1b;line-height:12px">Clear Slot</div><div style="left:7.5px;top:43px;width:160px;height:1px;background:#d8d8d8"></div><div style="left:4.6px;top:66px;width:165px;height:18.6px;background:#f0f0f0;border-radius:4px"></div><div class="t" style="left:32px;top:51px;font-size:10px;color:#1b1b1b;line-height:12px">Image Effect</div><div class="t" style="left:32px;top:70.3px;font-size:10px;color:#1b1b1b;line-height:12px;letter-spacing:-.25px">VDJ Visualization</div><svg style="left:137px;top:52px" width="8" height="10" viewBox="0 0 8 10"><path d="M2.3 1.6 L5.8 5 L2.3 8.4" fill="none" stroke="#333" stroke-width="1"/></svg><svg style="left:137px;top:71px" width="8" height="10" viewBox="0 0 8 10"><path d="M2.3 1.6 L5.8 5 L2.3 8.4" fill="none" stroke="#333" stroke-width="1"/></svg></div>
<div style="left:588px;top:0;width:291px;height:968px;background:#f9f9f9;overflow:hidden">
<div style="left:5px;top:133.4px;width:281px;height:18.2px;background:#f0f0f0;border-radius:4px"></div>
<div class="mi" style="top:6.6px;letter-spacing:-0.119px">User Handle</div>
<div class="mi" style="top:25.27px;letter-spacing:-0.372px">Laser Beams</div>
<div class="mi" style="top:43.93px;letter-spacing:-0.169px">Lentejuelas Doradas</div>
<div class="mi" style="top:62.6px;letter-spacing:-0.086px">Dancing Girls</div>
<div class="mi" style="top:81.27px;letter-spacing:0.154px">Pulsating Colorful Tunnel Zoom</div>
<div class="mi" style="top:99.94px;letter-spacing:-0.191px">Karaoke Request Pattern</div>
<div class="mi" style="top:118.6px;letter-spacing:-0.125px">Cosmic Sparkle Explosion</div>
<div class="mi" style="top:137.27px;letter-spacing:-0.108px">Real-time Blue Neon EQ Visualizer</div>
<div class="mi" style="top:155.94px;letter-spacing:0.052px">Tomorrowland Image Request</div>
<div class="mi" style="top:174.6px;letter-spacing:0.032px">Pride Grid Distortion Glow</div>
<div class="mi" style="top:193.27px;letter-spacing:-0.139px">Pride Beat Glow Grid</div>
<div class="mi" style="top:211.94px;letter-spacing:-0.052px">Beat Reactive Pride Distortion Glow</div>
<div class="mi" style="top:230.6px;letter-spacing:-0.035px">Headphones</div>
<div class="mi" style="top:249.27px;letter-spacing:0.01px">Rocaille Turbulence</div>
<div class="mi" style="top:267.94px;letter-spacing:-0.079px">Musical Fractal Visualizer</div>
<div class="mi" style="top:286.61px;letter-spacing:-0.139px">Hashed Pride Circles</div>
<div class="mi" style="top:305.27px;letter-spacing:-0.298px">60s Rock and Roll DJ</div>
<div class="mi" style="top:323.94px;letter-spacing:0.029px">Pulsing Blob with Fractal</div>
<div class="mi" style="top:342.61px;letter-spacing:-0.135px">Beat Pulse Concept</div>
<div class="mi" style="top:361.27px;letter-spacing:-0.099px">DJ Ligamegamix</div>
<div class="mi" style="top:379.94px;letter-spacing:-0.198px">80s DJ Liga Megamix</div>
<div class="mi" style="top:398.61px;letter-spacing:0.128px">Bouncing Triangles Animation</div>
<div class="mi" style="top:417.27px;letter-spacing:-0.273px">Metalhead Bear DJ Rave</div>
<div class="mi" style="top:435.94px;letter-spacing:0.046px">Dancing Shrimp Underwater with Headphones</div>
<div class="mi" style="top:454.61px;letter-spacing:-0.055px">People Dancing</div>
<div class="mi" style="top:473.28px;letter-spacing:-0.038px">Retro Neon City Drive</div>
<div class="mi" style="top:491.94px;letter-spacing:0.033px">Colorful Disco Ball</div>
<div class="mi" style="top:510.61px;letter-spacing:-0.226px">70s Disco Lava Lamp</div>
<div class="mi" style="top:529.28px;letter-spacing:-0.039px">Corazones Blancos Difuminados</div>
<div class="mi" style="top:547.94px;letter-spacing:-0.071px">Miami Vice Fiesta</div>
<div class="mi" style="top:566.61px;letter-spacing:0.029px">Abstract Liquid Fire</div>
<div class="mi" style="top:585.28px;letter-spacing:0.004px">Cyberpunk Club Dancer</div>
<div class="mi" style="top:603.94px;letter-spacing:-0.177px">Kung Fu Panda EDM Dance</div>
<div class="mi" style="top:622.61px;letter-spacing:-0.097px">Dancing Bipedal Shark</div>
<div class="mi" style="top:641.28px;letter-spacing:-0.376px">LED Equalizer Rack</div>
<div class="mi" style="top:659.95px;letter-spacing:-0.142px">90s Retro Music Dream</div>
<div class="mi" style="top:678.61px;letter-spacing:-0.085px">Pista de Baile Disco Iluminada</div>
<div class="mi" style="top:697.28px;letter-spacing:-0.234px">Bomba DJ en Fiesta de Playa</div>
<div class="mi" style="top:715.95px;letter-spacing:-0.183px">Techno Desert Rave</div>
<div class="mi" style="top:734.61px;letter-spacing:-0.02px">LA Night Beats</div>
<div class="mi" style="top:753.28px;letter-spacing:-0.04px">Alien Disco Party</div>
<div class="mi" style="top:771.95px;letter-spacing:-0.121px">Alien Dance Party in Space</div>
<div class="mi" style="top:790.61px;letter-spacing:0.079px">4K Anamorphic Robot 3D Pop-Out Illusion</div>
<div class="mi" style="top:809.28px;letter-spacing:-0.175px">80s Funk Dance Loop</div>
<div class="mi" style="top:827.95px;letter-spacing:-0.099px">Golden Disco Ball</div>
<div class="mi" style="top:846.62px;letter-spacing:0.095px">do me a dancing Cow dj</div>
<div class="mi" style="top:865.28px;letter-spacing:0.016px">Circus Chimps Dancing</div>
<div class="mi" style="top:883.95px;letter-spacing:-0.065px">Club Shadow Dancer</div>
<div class="mi" style="top:902.62px;letter-spacing:-0.101px">i need a 80s themed</div>
<div class="mi" style="top:921.28px;letter-spacing:-0.123px">Danseur Disco Urbain</div>
<div class="mi" style="top:939.95px;letter-spacing:-0.09px">Dancing DJ Cow in Pub</div>
<div class="mi" style="top:958.62px;letter-spacing:-0.068px">Neon Disco Ball</div>
</div>
</body></html>
